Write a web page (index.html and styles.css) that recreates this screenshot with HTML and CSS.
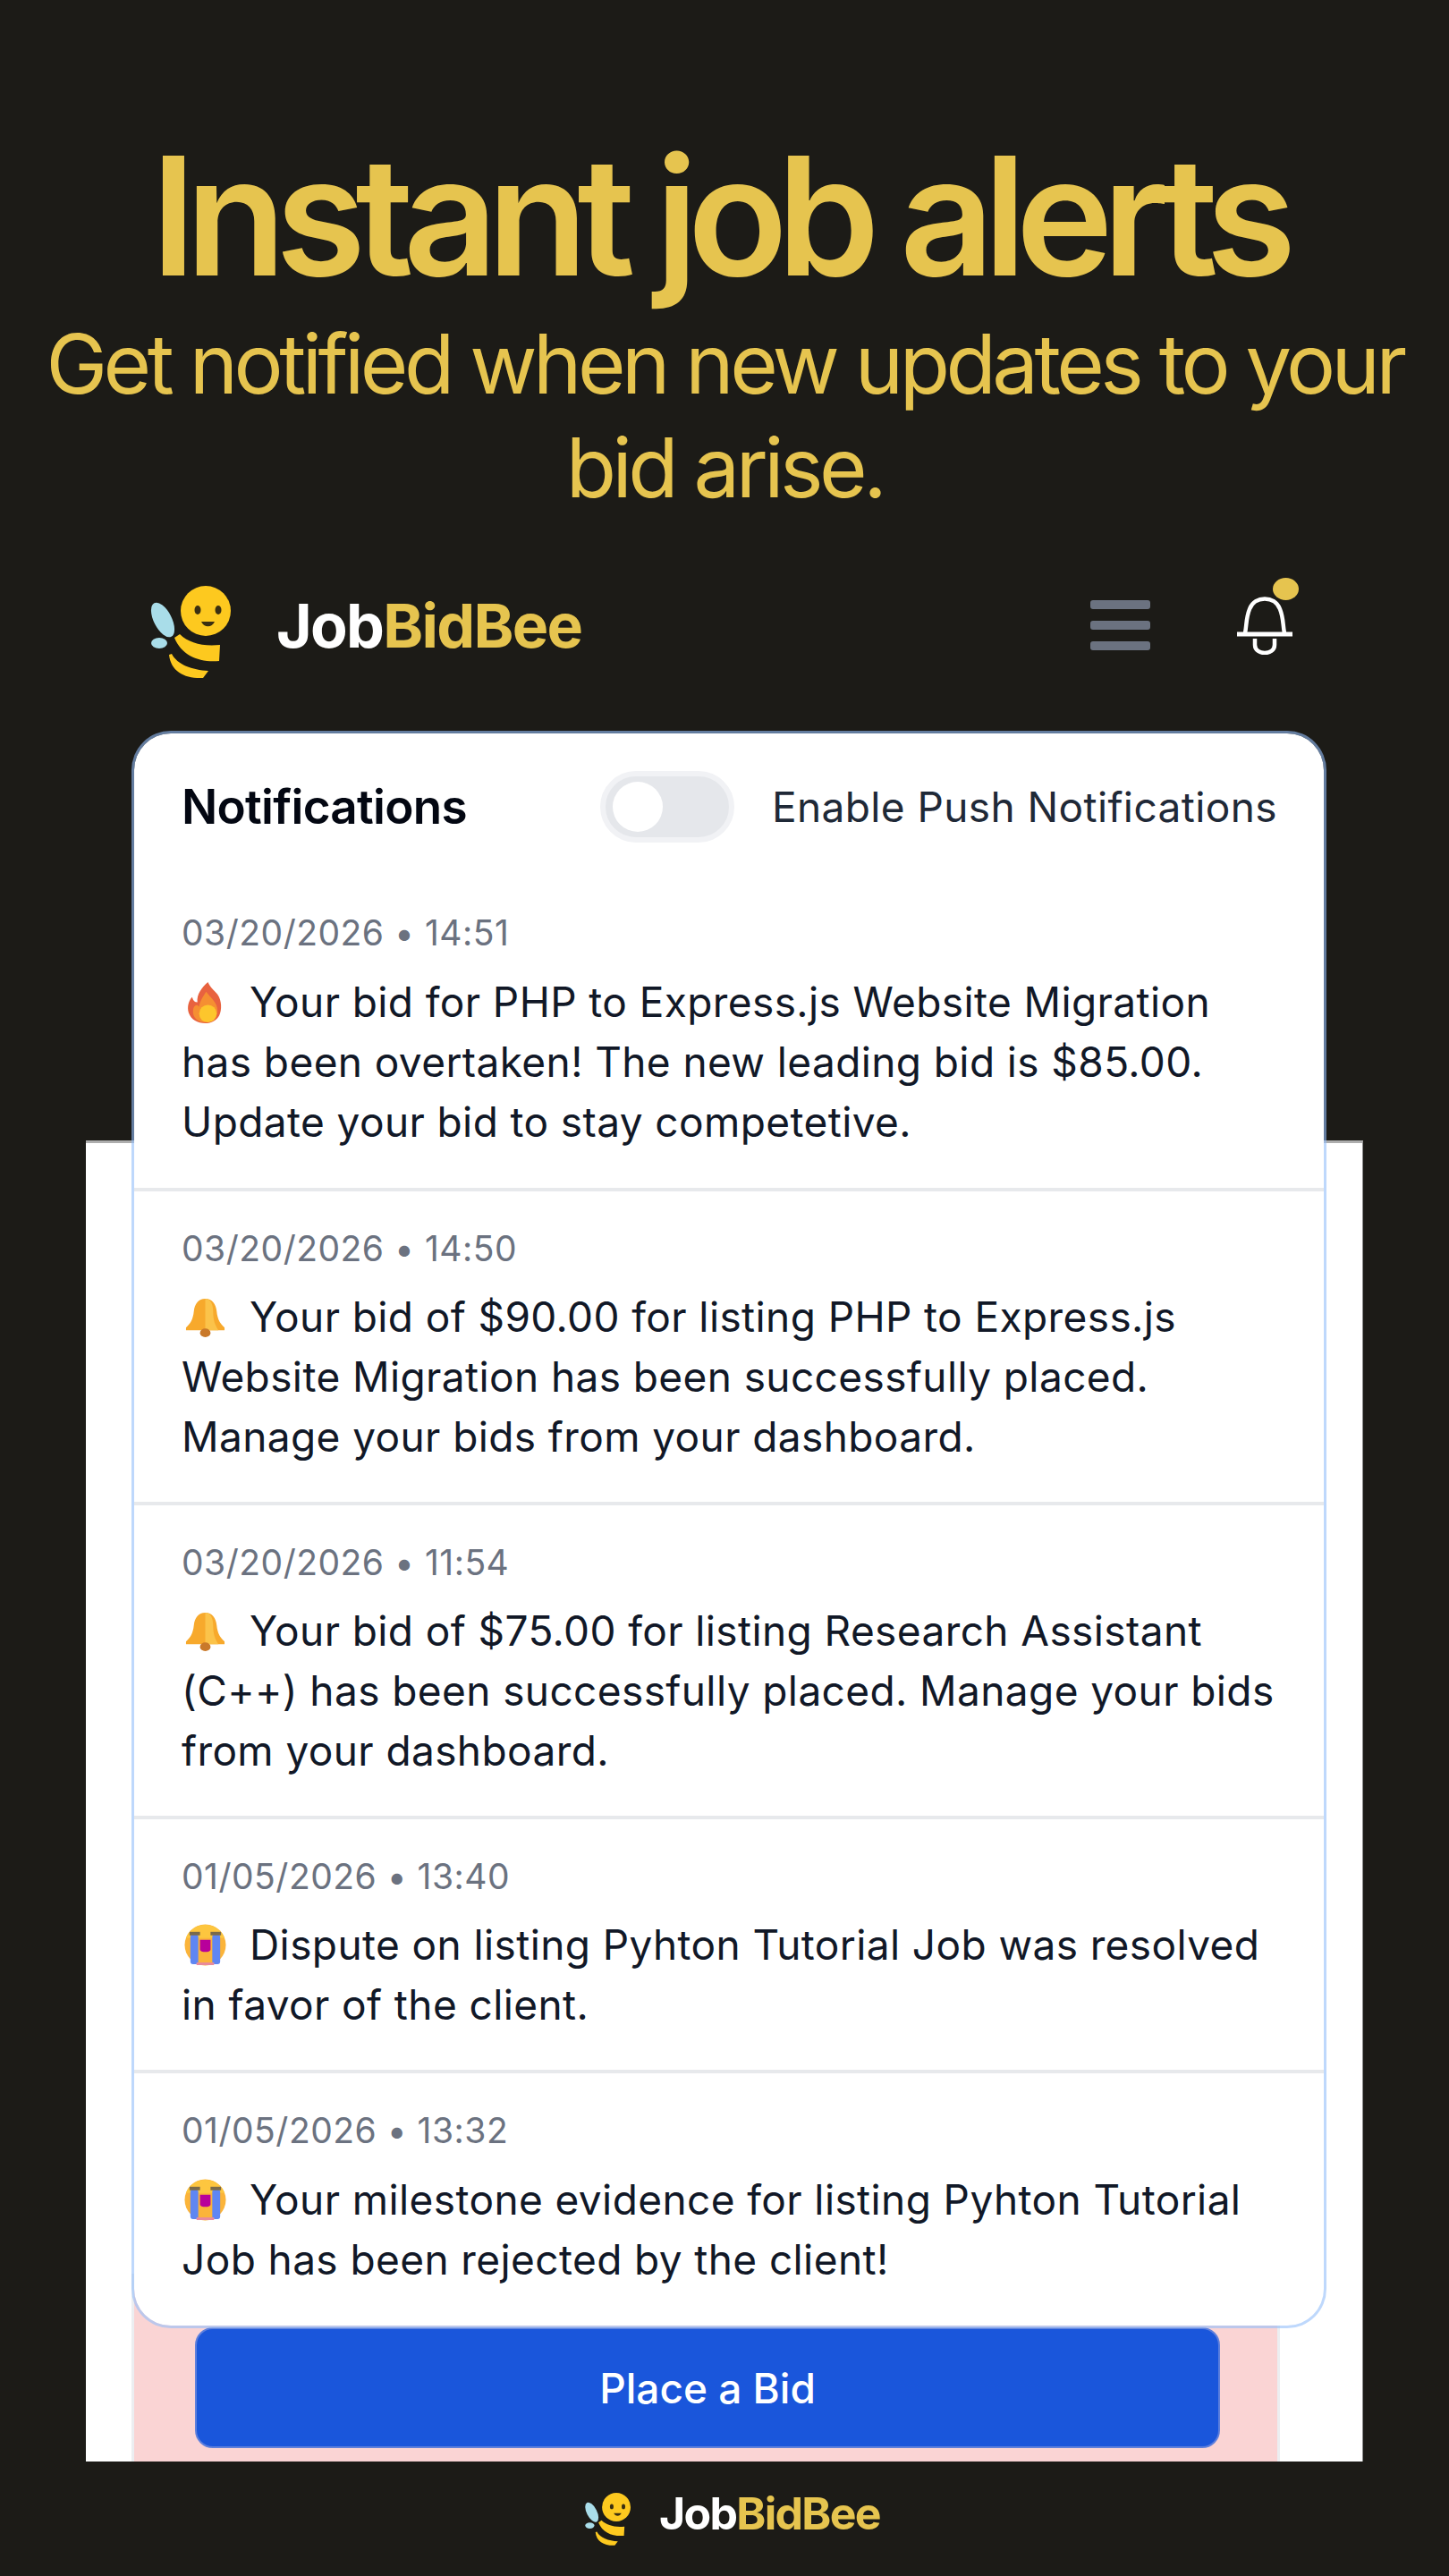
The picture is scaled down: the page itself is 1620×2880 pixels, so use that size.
FILE: index.html
```html
<!DOCTYPE html>
<html lang="en">
<head>
<meta charset="utf-8">
<title>JobBidBee - Instant job alerts</title>
<link rel="stylesheet" href="styles.css">
</head>
<body>
<svg class="defs" width="0" height="0" aria-hidden="true">
  <defs>
    <symbol id="bee" viewBox="0 0 100 105">
      <ellipse cx="17" cy="38" rx="10" ry="21" transform="rotate(-27 17 38)" fill="#a9dde9"/>
      <ellipse cx="13" cy="64" rx="9" ry="6" fill="#a9dde9"/>
      <path d="M30 58 L36 54 C46 64 62 68 81 66 L80 84 C58 86 38 78 30 58Z" fill="#fdc91f"/>
      <path d="M24 77 L27 76 C33 88 50 94 68 95 L62 103 C42 104 26 96 24 77Z" fill="#fdc91f"/>
      <circle cx="65" cy="28" r="28" fill="#fdc91f"/>
      <ellipse cx="56" cy="27" rx="3.5" ry="5" fill="#3a2f12"/>
      <ellipse cx="79" cy="27" rx="3.5" ry="5" fill="#3a2f12"/>
      <path d="M60 40 C63 47 72 47 75 40Z" fill="#3a2f12"/>
    </symbol>
    <symbol id="fire" viewBox="0 0 40 48">
      <path d="M23 1 C26 8 30 10 34 15 C39 22 39 33 36 39 C33 45 27 48 20 48 C11 48 4 44 1 36 C-1 29 1 22 5 18 C6 22 8 24 11 24 C10 15 16 7 23 1Z" fill="#e8623f"/>
      <path d="M21 12 C26 19 34 24 34 34 C34 42 27 47 20 47 C12 47 6 42 6 35 C6 28 10 25 13 29 C14 22 18 17 21 12Z" fill="#f58f32"/>
      <ellipse cx="23" cy="37" rx="10" ry="10" fill="#fdc62c"/>
    </symbol>
    <symbol id="alarm" viewBox="0 0 48 48">
      <path d="M24 3 C32 3 36 9 37 17 C38 27 41 31 46 36 L46 39 L2 39 L2 36 C7 31 10 27 11 17 C12 9 16 3 24 3Z" fill="#f7a92c"/>
      <path d="M24 3 C30 3 33 9 33 18 C33 27 35 33 39 39 L24 39Z" fill="#fbc34a"/>
      <ellipse cx="24" cy="42" rx="6" ry="5" fill="#c9792a"/>
    </symbol>
    <symbol id="cry" viewBox="0 0 48 48">
      <circle cx="24" cy="24" r="23.5" fill="#fbb43a"/>
      <path d="M24 1 A23.5 23.5 0 0 1 46 16 L2 16 A23.5 23.5 0 0 1 24 1Z" fill="#fdc63f"/>
      <rect x="7" y="12" width="9" height="34" rx="3" fill="#5f86f2"/>
      <rect x="32" y="12" width="9" height="34" rx="3" fill="#5f86f2"/>
      <rect x="6" y="9" width="12" height="4" fill="#7a6a4a"/>
      <rect x="30" y="9" width="12" height="4" fill="#7a6a4a"/>
      <path d="M18 18 H30 V29 C30 33 18 33 18 29Z" fill="#b8009b"/>
      <rect x="14" y="44" width="20" height="3" fill="#e98a9c"/>
    </symbol>
  </defs>
</svg>

<header class="hero">
  <h1 class="hero-title">Instant job alerts</h1>
  <p class="hero-sub">Get notified when new updates to your bid arise.</p>
</header>

<main class="stage">
  <nav class="topbar">
    <a class="brand">
      <svg class="brand-bee"><use href="#bee"/></svg>
      <span class="brand-name">Job<b>BidBee</b></span>
    </a>
    <div class="topbar-actions">
      <span class="burger"><i></i><i></i><i></i></span>
      <span class="bell">
        <svg class="bell-icon" viewBox="0 0 62 65" fill="none" stroke="#fff" stroke-width="4.5">
          <path d="M9 41 C11 30 10 24 14 14 C17 6 24 2.5 31 2.5 C38 2.5 45 6 48 14 C52 24 51 30 53 41"/>
          <path d="M0 42 H62" stroke-width="5"/>
          <path d="M20 47 V54 C20 66 42 66 42 54 V47"/>
        </svg>
        <span class="bell-dot"></span>
      </span>
    </div>
  </nav>

  <section class="page-panel">
    <div class="bid-box">
      <button class="bid-button">Place a Bid</button>
    </div>
  </section>

  <aside class="notif-card">
    <div class="notif-head">
      <h2 class="notif-title">Notifications</h2>
      <div class="push">
        <span class="toggle"><span class="knob"></span></span>
        <span class="push-label">Enable Push Notifications</span>
      </div>
    </div>
    <ul class="notif-list">
      <li class="notif notif-first">
        <time class="notif-date">03/20/2026 • 14:51</time>
        <p class="notif-text"><svg class="emoji"><use href="#fire"/></svg>Your bid for PHP to Express.js Website Migration has been overtaken! The new leading bid is $85.00. Update your bid to stay competetive.</p>
      </li>
      <li class="notif">
        <time class="notif-date">03/20/2026 • 14:50</time>
        <p class="notif-text"><svg class="emoji"><use href="#alarm"/></svg>Your bid of $90.00 for listing PHP to Express.js Website Migration has been successfully placed. Manage your bids from your dashboard.</p>
      </li>
      <li class="notif">
        <time class="notif-date">03/20/2026 • 11:54</time>
        <p class="notif-text"><svg class="emoji"><use href="#alarm"/></svg>Your bid of $75.00 for listing Research Assistant (C++) has been successfully placed. Manage your bids from your dashboard.</p>
      </li>
      <li class="notif notif-short">
        <time class="notif-date">01/05/2026 • 13:40</time>
        <p class="notif-text"><svg class="emoji"><use href="#cry"/></svg>Dispute on listing Pyhton Tutorial Job was resolved in favor of the client.</p>
      </li>
      <li class="notif notif-short">
        <time class="notif-date">01/05/2026 • 13:32</time>
        <p class="notif-text"><svg class="emoji"><use href="#cry"/></svg>Your milestone evidence for listing Pyhton Tutorial Job has been rejected by the client!</p>
      </li>
    </ul>
  </aside>
</main>

<footer class="foot">
  <svg class="foot-bee"><use href="#bee"/></svg>
  <span class="foot-name">Job<b>BidBee</b></span>
</footer>
</body>
</html>
```

FILE: styles.css
```css
* { box-sizing: border-box; }
html, body { margin: 0; padding: 0; }
body {
  width: 1620px;
  height: 2880px;
  overflow: hidden;
  background: #1c1b17;
  font-family: Inter, "Liberation Sans", sans-serif;
  display: flex;
  flex-direction: column;
}
.defs { position: absolute; }

.hero { padding: 138px 40px 0; text-align: center; color: #e6c44f; height: 620px; }
.hero-title {
  margin: 0 14px 0 0;
  font-size: 184px;
  font-weight: 600;
  line-height: 206px;
  letter-spacing: -12px;
}
.hero-sub {
  margin: 5px -20px 0;
  font-size: 92px;
  font-weight: 400;
  line-height: 116px;
  letter-spacing: -4.5px;
}

.stage { position: relative; height: 2132px; padding: 0 96px; }

.topbar { height: 195px; padding: 35px 79px 0 69px; display: flex; justify-content: space-between; align-items: flex-start; }
.brand { display: flex; align-items: center; gap: 44px; height: 105px; }
.brand-bee { width: 100px; height: 105px; }
.brand-name { font-weight: 700; font-size: 68px; letter-spacing: -1.7px; color: #fff; margin-bottom: 18px; }
.brand-name b { color: #e6c44f; font-weight: 700; }
.topbar-actions { display: flex; align-items: flex-start; gap: 97px; }
.burger { display: flex; flex-direction: column; gap: 13px; width: 67px; padding-top: 16px; }
.burger i { display: block; height: 10px; background: #6b7280; border-radius: 3px; }
.bell { position: relative; display: block; width: 62px; height: 65px; margin-top: 12px; }
.bell-icon { display: block; width: 62px; height: 65px; }
.bell-dot { position: absolute; top: -21px; right: -7px; width: 29px; height: 25px; border-radius: 50%; background: #e6c44f; }

.page-panel {
  height: 1477px;
  margin-top: 460px;
  background: #fff;
  border-top: 3px solid #adadad;
  border-right: 1px solid #8c8c8c;
  padding: 0 92px 0 51px;
  display: flex;
  align-items: flex-end;
}
.bid-box {
  width: 100%;
  height: 210px;
  background: #fad4d4;
  border-left: 3px solid #eceef1;
  border-right: 3px solid #eceef1;
  padding: 0 64px 15px 68px;
  display: flex;
  align-items: flex-end;
}
.bid-button {
  width: 100%;
  height: 135px;
  border: 2px solid #5d7fdc;
  border-radius: 20px;
  background: #1a56db;
  color: #fff;
  font: 500 46px Inter, "Liberation Sans", sans-serif;
}

.notif-card {
  position: absolute;
  left: 147px;
  top: 197px;
  width: 1336px;
  height: 1786px;
  background: #fff;
  background-clip: padding-box;
  border: 3px solid rgba(147, 190, 250, .6);
  border-radius: 44px;
  overflow: hidden;
  color: #111827;
}
.notif-head { height: 164px; padding: 0 52px 0 53px; display: flex; justify-content: space-between; align-items: center; }
.notif-title { margin: 0; font-size: 53px; font-weight: 600; letter-spacing: -.7px; color: #030712; }
.push { display: flex; align-items: center; gap: 42px; }
.toggle { display: block; width: 150px; height: 80px; border-radius: 40px; background: #e5e7eb; border: 6px solid #f1f2f5; padding: 6px 8px; }
.knob { display: block; width: 56px; height: 56px; border-radius: 50%; background: #fff; }
.push-label { font-size: 46px; color: #1f2937; letter-spacing: .4px; }

.notif-list { list-style: none; margin: 0; padding: 0; }
.notif { height: 351px; padding: 39px 52px 0 53px; border-top: 4px solid #e7e9ec; }
.notif-first { height: 344px; border-top: 0; padding-top: 34px; }
.notif-short { height: 284px; }
.notif-date { display: block; font-size: 39px; line-height: 50px; color: #6b7280; letter-spacing: .5px; }
.notif-text { margin: 18px 0 0; font-size: 46px; line-height: 67px; color: #111827; letter-spacing: .4px; }
.notif:first-child .notif-text, .notif:last-child .notif-text { margin-top: 19px; }
.emoji { display: inline-block; width: 47px; height: 47px; margin: 0 26px 0 3px; vertical-align: -7px; }

.foot { position: absolute; left: 652px; top: 2787px; display: flex; align-items: flex-start; gap: 28px; }
.foot-bee { width: 57px; height: 60px; }
.foot-name { font-weight: 700; font-size: 50px; line-height: 46px; letter-spacing: -1.7px; color: #fff; }
.foot-name b { color: #e6c44f; font-weight: 700; }
```
